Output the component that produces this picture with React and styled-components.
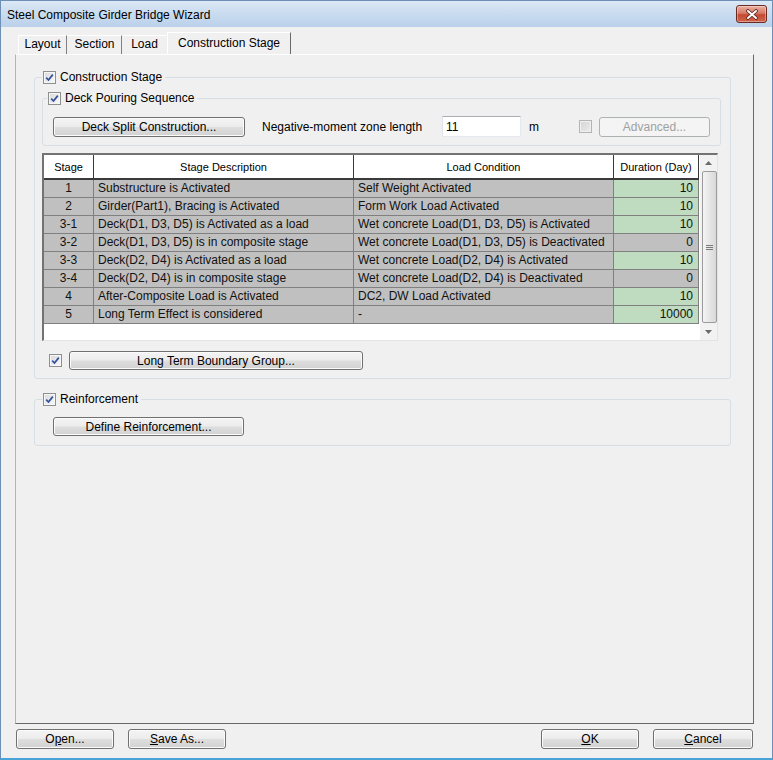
import React from 'react';
import styled, { createGlobalStyle } from 'styled-components';

const GlobalStyle = createGlobalStyle`
  * { box-sizing: border-box; }
  html, body { margin: 0; padding: 0; background: #f0f0f0; }
  body {
    font-family: "Liberation Sans", Arial, sans-serif;
    font-size: 12px;
    color: #000;
  }
  button, input, legend { font: inherit; color: inherit; }
`;

const Window = styled.div`
  width: 773px;
  height: 760px;
  display: flex;
  flex-direction: column;
  background: #f0f0f0;
  border: 1px solid #6d8fb6;
  border-bottom: 2px solid #48a4d6;
`;

const TitleBar = styled.div`
  height: 26px;
  flex-shrink: 0;
  display: flex;
  align-items: center;
  justify-content: space-between;
  padding: 0 5px 0 6px;
  background: linear-gradient(#dce8f5, #c7daef 55%, #bbd1ea);
`;

const TitleText = styled.span`
  font-size: 12px;
  margin-top: 1px;
`;

const CloseButton = styled.div`
  width: 31px;
  height: 18px;
  display: flex;
  align-items: center;
  justify-content: center;
  border: 1px solid #6a2a20;
  border-radius: 3px;
  background: linear-gradient(#eab0a2, #d77a68 45%, #c44a33 55%, #d0654c);
  box-shadow: inset 0 0 0 1px rgba(255, 255, 255, 0.35);
`;

const Content = styled.div`
  flex: 1;
  display: flex;
  flex-direction: column;
  padding: 6px 18px 0 14px;
`;

const TabRow = styled.div`
  height: 21px;
  display: flex;
  align-items: flex-end;
  padding-left: 3px;
`;

const Tab = styled.div`
  width: ${p => p.$w}px;
  height: ${p => (p.$active ? 23 : 19)}px;
  margin-bottom: ${p => (p.$active ? -1 : 0)}px;
  display: flex;
  align-items: center;
  justify-content: center;
  background: #f0f0f0;
  border-top: 1px solid #fff;
  border-left: 1px solid ${p => (p.$first || p.$active ? '#fff' : 'transparent')};
  border-right: 1px solid ${p => (p.$active ? '#696969' : p.$sep ? '#808080' : 'transparent')};
  font-size: 12px;
  padding-bottom: ${p => (p.$active ? 3 : 2)}px;
`;

const Panel = styled.div`
  height: 670px;
  flex-shrink: 0;
  border: 1px solid;
  border-color: #fff #696969 #696969 #b4b4b4;
  padding: 15px 22px 0 18px;
`;

const Group = styled.fieldset`
  margin: ${p => p.$mt || 0}px 0 0;
  padding: ${p => p.$pad};
  border: 1px solid #d5dfe5;
  border-radius: 3px;
  min-width: 0;
`;

const Legend = styled.legend`
  display: flex;
  align-items: center;
  gap: 4px;
  height: 14px;
  line-height: 14px;
  padding: 0 3px 0 1px;
  margin-left: ${p => p.$ml || 0}px;
  font-size: 12px;
`;

const Row = styled.div`
  display: flex;
  align-items: center;
  height: ${p => p.$h || 21}px;
  margin-top: ${p => p.$mt || 0}px;
`;

const Button = styled.button`
  width: ${p => p.$w}px;
  height: ${p => p.$h || 20}px;
  margin-left: ${p => p.$ml || 0}px;
  padding: 0;
  flex-shrink: 0;
  border: 1px solid #707070;
  border-radius: 3px;
  background: linear-gradient(#f4f4f4, #ececec 48%, #dedede 52%, #d2d2d2);
  box-shadow: inset 0 0 0 1px #fbfbfb;
  font-size: 12px;
  line-height: 16px;
  color: #000;

  &:disabled {
    border-color: #adb2b5;
    background: #f4f4f4;
    box-shadow: none;
    color: #a0a0a0;
  }
`;

const Label = styled.span`
  width: ${p => p.$w}px;
  margin-left: ${p => p.$ml || 0}px;
  flex-shrink: 0;
  white-space: nowrap;
  font-size: 12px;
`;

const TextInput = styled.input`
  width: 79px;
  height: 21px;
  padding: 0 3px;
  border: 1px solid;
  border-color: #abadb3 #e3e9ef #e3e9ef #e2e3ea;
  background: #fff;
  font-size: 12px;
  outline: none;
`;

const CheckBox = styled.span`
  width: 13px;
  height: 13px;
  flex-shrink: 0;
  margin-left: ${p => p.$ml || 0}px;
  display: inline-flex;
  align-items: center;
  justify-content: center;
  border: 1px solid ${p => (p.$disabled ? '#b4b4b4' : '#8e8f8f')};
  background: ${p =>
    p.$disabled
      ? 'linear-gradient(135deg, #d4d4d4, #ececec)'
      : 'linear-gradient(135deg, #d8d8d8, #fbfbfb)'};
  box-shadow: inset 0 0 0 1px ${p => (p.$disabled ? '#f0f0f0' : '#f6f6f6')};
`;

const Check = ({ checked = true, disabled, ml }) => (
  <CheckBox $disabled={disabled} $ml={ml}>
    {checked && (
      <svg width="9" height="9" viewBox="0 0 9 9">
        <path d="M1.2 4.6 L3.5 7 L7.8 1.6" fill="none" stroke="#33509e" strokeWidth="1.7" />
      </svg>
    )}
  </CheckBox>
);

const TableFrame = styled.div`
  width: 676px;
  height: 188px;
  margin-top: 7px;
  display: flex;
  border-style: solid;
  border-width: 2px 1px 1px 2px;
  border-color: #737373 #e3e3e3 #e3e3e3 #737373;
  background: #fff;
`;

const Grid = styled.div`
  width: 655px;
  margin-right: 1px;
  display: grid;
  grid-template-columns: 50px 260px 260px 85px;
  grid-template-rows: 25px;
  grid-auto-rows: 18px;
  align-content: start;
`;

const HeadCell = styled.div`
  display: flex;
  align-items: center;
  justify-content: center;
  background: #fff;
  border-right: 1px solid #3a3a3a;
  border-bottom: 2px solid #3a3a3a;
  font-size: 11px;
`;

const Cell = styled.div`
  display: flex;
  align-items: center;
  justify-content: ${p => (p.$align === 'right' ? 'flex-end' : p.$align === 'center' ? 'center' : 'flex-start')};
  padding: 0 ${p => (p.$align === 'right' ? 5 : 0)}px 1px ${p => (p.$align === 'left' ? 4 : 0)}px;
  background: ${p => (p.$green ? '#c0dcc0' : '#c0c0c0')};
  border-right: 1px solid #808080;
  border-bottom: 1px solid #808080;
  white-space: nowrap;
  overflow: hidden;
  font-size: 12px;
  color: #111;
`;

const ScrollBar = styled.div`
  width: 17px;
  display: flex;
  flex-direction: column;
  background: #f2f2f2;
`;

const ScrollArrow = styled.div`
  height: ${p => p.$h}px;
  display: flex;
  align-items: center;
  justify-content: center;
`;

const Thumb = styled.div`
  flex: 1;
  margin: 0 0 0 2px;
  display: flex;
  align-items: center;
  justify-content: center;
  border: 1px solid #9b9b9b;
  border-radius: 2px;
  background: linear-gradient(to right, #f4f4f4, #e6e6e6 50%, #d8d8d8);
`;

const Footer = styled.div`
  display: flex;
  justify-content: space-between;
  margin-top: 5px;
  padding: 0 1px 0 1px;
`;

const ButtonGroup = styled.div`
  display: flex;
  gap: 14px;
`;

const stages = [
  ['1', 'Substructure is Activated', 'Self Weight Activated', '10', true],
  ['2', 'Girder(Part1), Bracing is Activated', 'Form Work Load Activated', '10', true],
  ['3-1', 'Deck(D1, D3, D5) is Activated as a load', 'Wet concrete Load(D1, D3, D5) is Activated', '10', true],
  ['3-2', 'Deck(D1, D3, D5) is in composite stage', 'Wet concrete Load(D1, D3, D5) is Deactivated', '0', false],
  ['3-3', 'Deck(D2, D4) is Activated as a load', 'Wet concrete Load(D2, D4) is Activated', '10', true],
  ['3-4', 'Deck(D2, D4) is in composite stage', 'Wet concrete Load(D2, D4) is Deactivated', '0', false],
  ['4', 'After-Composite Load is Activated', 'DC2, DW Load Activated', '10', true],
  ['5', 'Long Term Effect is considered', '-', '10000', true],
];

export default function App() {
  return (
    <>
      <GlobalStyle />
      <Window>
        <TitleBar>
          <TitleText>Steel Composite Girder Bridge Wizard</TitleText>
          <CloseButton>
            <svg width="14" height="11" viewBox="0 0 14 11">
              <path d="M3 2 L11 9 M11 2 L3 9" stroke="#5a231b" strokeWidth="3.6" strokeLinecap="round" />
              <path d="M3 2 L11 9 M11 2 L3 9" stroke="#fff" strokeWidth="2" strokeLinecap="round" />
            </svg>
          </CloseButton>
        </TitleBar>

        <Content>
          <TabRow>
            <Tab $w={49} $first $sep>Layout</Tab>
            <Tab $w={55} $sep>Section</Tab>
            <Tab $w={45}>Load</Tab>
            <Tab $w={124} $active>Construction Stage</Tab>
          </TabRow>

          <Panel>
            <Group $pad="7px 9px 8px 7px">
              <Legend>
                <Check />
                Construction Stage
              </Legend>

              <Group $pad="11px 10px 8px 10px">
                <Legend $ml={-6}>
                  <Check />
                  Deck Pouring Sequence
                </Legend>
                <Row>
                  <Button $w={192}>Deck Split Construction...</Button>
                  <Label $w={180} $ml={17}>Negative-moment zone length</Label>
                  <TextInput defaultValue="11" />
                  <Label $w={50} $ml={8}>m</Label>
                  <Check checked={false} disabled />
                  <Button $w={111} $ml={7} disabled>Advanced...</Button>
                </Row>
              </Group>

              <TableFrame>
                <Grid>
                  <HeadCell>Stage</HeadCell>
                  <HeadCell>Stage Description</HeadCell>
                  <HeadCell>Load Condition</HeadCell>
                  <HeadCell>Duration (Day)</HeadCell>
                  {stages.map(([stage, desc, load, days, editable]) => (
                    <React.Fragment key={stage}>
                      <Cell $align="center">{stage}</Cell>
                      <Cell $align="left">{desc}</Cell>
                      <Cell $align="left">{load}</Cell>
                      <Cell $align="right" $green={editable}>{days}</Cell>
                    </React.Fragment>
                  ))}
                </Grid>
                <ScrollBar>
                  <ScrollArrow $h={16}>
                    <svg width="7" height="4" viewBox="0 0 7 4"><path d="M0 4 L3.5 0 L7 4 Z" fill="#6b6b6b" /></svg>
                  </ScrollArrow>
                  <Thumb>
                    <svg width="7" height="7" viewBox="0 0 7 7">
                      <path d="M0 1.5 H7 M0 3.5 H7 M0 5.5 H7" stroke="#7a7a7a" strokeWidth="1" />
                    </svg>
                  </Thumb>
                  <ScrollArrow $h={17}>
                    <svg width="7" height="4" viewBox="0 0 7 4"><path d="M0 0 L3.5 4 L7 0 Z" fill="#6b6b6b" /></svg>
                  </ScrollArrow>
                </ScrollBar>
              </TableFrame>

              <Row $h={19} $mt={10}>
                <Check ml={7} />
                <Button $w={294} $h={19} $ml={7}>Long Term Boundary Group...</Button>
              </Row>
            </Group>

            <Group $mt={13} $pad="11px 9px 9px 18px">
              <Legend $ml={-11}>
                <Check />
                Reinforcement
              </Legend>
              <Row $h={19}>
                <Button $w={191} $h={19}>Define Reinforcement...</Button>
              </Row>
            </Group>
          </Panel>

          <Footer>
            <ButtonGroup>
              <Button $w={98}>O<u>p</u>en...</Button>
              <Button $w={98}><u>S</u>ave As...</Button>
            </ButtonGroup>
            <ButtonGroup>
              <Button $w={98}><u>O</u>K</Button>
              <Button $w={100}><u>C</u>ancel</Button>
            </ButtonGroup>
          </Footer>
        </Content>
      </Window>
    </>
  );
}
